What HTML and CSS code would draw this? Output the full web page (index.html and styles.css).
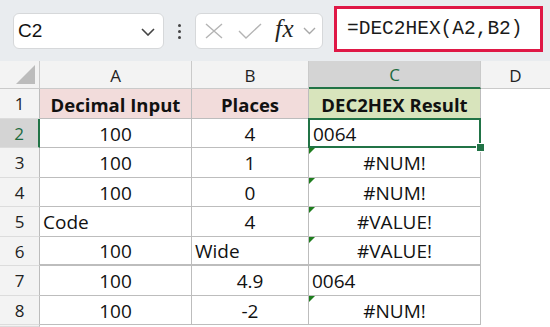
FILE: index.html
```html
<!DOCTYPE html>
<html lang="en">
<head>
    <meta charset="UTF-8">
    <title>DEC2HEX</title>
    <link rel="stylesheet" href="styles.css">
</head>
<body>
    <div class="toolbar">
        <div class="namebox">
            <span>C2</span>
            <svg class="chev" width="14" height="8" viewBox="0 0 14 8"><path d="M1 1 L7 7 L13 1" fill="none" stroke="#444" stroke-width="1.6"/></svg>
        </div>
        <div class="dots"><i></i><i></i><i></i></div>
        <div class="fxbox">
            <svg width="20" height="16" viewBox="0 0 20 16"><path d="M2 1 L18 15 M18 1 L2 15" stroke="#b4b4b4" stroke-width="1.4" fill="none"/></svg>
            <svg width="24" height="16" viewBox="0 0 24 16"><path d="M1 8 L8 15 L23 1" stroke="#b4b4b4" stroke-width="1.4" fill="none"/></svg>
            <span class="fx">fx</span>
            <svg width="13" height="8" viewBox="0 0 13 8"><path d="M1 1 L6.5 6.5 L12 1" fill="none" stroke="#a8a8a8" stroke-width="1.4"/></svg>
        </div>
        <div class="formula">=DEC2HEX(A2,B2)</div>
    </div>

    <div class="sheet">
        <div class="corner"><div class="tri"></div></div>
        <div class="colhead">A</div>
        <div class="colhead">B</div>
        <div class="colhead active">C</div>
        <div class="colhead last">D</div>

        <div class="rowhead">1</div>
        <div class="cell head pink">Decimal Input</div>
        <div class="cell head pink">Places</div>
        <div class="cell head green">DEC2HEX Result</div>
        <div class="blank"></div>

        <div class="rowhead active">2</div>
        <div class="cell">100</div>
        <div class="cell">4</div>
        <div class="cell left selected">0064<span class="handle"></span></div>
        <div class="blank"></div>

        <div class="rowhead">3</div>
        <div class="cell">100</div>
        <div class="cell">1</div>
        <div class="cell flag">#NUM!</div>
        <div class="blank"></div>

        <div class="rowhead">4</div>
        <div class="cell">100</div>
        <div class="cell">0</div>
        <div class="cell flag">#NUM!</div>
        <div class="blank"></div>

        <div class="rowhead">5</div>
        <div class="cell left">Code</div>
        <div class="cell">4</div>
        <div class="cell flag">#VALUE!</div>
        <div class="blank"></div>

        <div class="rowhead">6</div>
        <div class="cell thick">100</div>
        <div class="cell left thick">Wide</div>
        <div class="cell flag thick">#VALUE!</div>
        <div class="blank"></div>

        <div class="rowhead">7</div>
        <div class="cell">100</div>
        <div class="cell">4.9</div>
        <div class="cell left">0064</div>
        <div class="blank"></div>

        <div class="rowhead">8</div>
        <div class="cell">100</div>
        <div class="cell">-2</div>
        <div class="cell flag">#NUM!</div>
        <div class="blank"></div>

        <div class="rowhead"></div>
        <div class="blank"></div>
        <div class="blank"></div>
        <div class="blank"></div>
        <div class="blank"></div>
    </div>
</body>
</html>
```

FILE: styles.css
```css
* {
    margin: 0;
    padding: 0;
    box-sizing: border-box;
}

body {
    width: 550px;
    height: 327px;
    overflow: hidden;
    background: #ffffff;
    font-family: "Open Sans", Arial, sans-serif;
    color: #111;
}

/* formula bar */
.toolbar {
    height: 61px;
    background: #e9ecef;
    display: flex;
    align-items: flex-start;
    padding-left: 13px;
}

.namebox {
    width: 151px;
    height: 36px;
    margin-top: 13px;
    background: #fff;
    border: 1px solid #d6d8da;
    border-radius: 6px;
    display: flex;
    align-items: center;
    justify-content: space-between;
    padding: 0 8px 0 4px;
    font-family: "Liberation Sans", Arial, sans-serif;
    font-size: 19px;
}

.namebox .chev {
    margin-top: 2px;
}

.dots {
    width: 4px;
    margin: 24px 0 0 14px;
    display: flex;
    flex-direction: column;
    gap: 3px;
}

.dots i {
    width: 3px;
    height: 3px;
    background: #444;
    border-radius: 50%;
}

.fxbox {
    width: 128px;
    height: 36px;
    margin: 13px 0 0 13px;
    background: #fff;
    border: 1px solid #d6d8da;
    border-radius: 6px;
    display: flex;
    align-items: center;
    padding-left: 8px;
    gap: 14px;
}

.fx {
    font-family: "Liberation Serif", serif;
    font-style: italic;
    font-size: 25px;
    color: #222;
    margin: -5px -5px 0 -1px;
    letter-spacing: 0.5px;
}

.formula {
    width: 209px;
    height: 46px;
    margin: 6px 0 0 11px;
    background: #fff;
    border: 3px solid #df1846;
    font-family: "Liberation Mono", monospace;
    font-size: 19.5px;
    line-height: 40px;
    padding-left: 10px;
    color: #1a1a1a;
}

/* grid */
.sheet {
    display: grid;
    grid-template-columns: 40px 152px 117px 172px 1fr;
    grid-template-rows: 28px 30px 29px 30px 29px 30px 29px 30px 29px 2px;
    font-family: "Open Sans", Arial, sans-serif;
}

.corner {
    background: #f3f3f3;
    border-right: 1px solid #cacaca;
    border-bottom: 1px solid #cacaca;
    position: relative;
}

.tri {
    position: absolute;
    right: 4px;
    bottom: 4px;
    width: 0;
    height: 0;
    border-left: 19px solid transparent;
    border-bottom: 19px solid #bcbcbc;
}

.colhead {
    background: #f3f3f3;
    border-right: 1px solid #cacaca;
    border-bottom: 1px solid #cacaca;
    display: flex;
    align-items: center;
    justify-content: center;
    font-size: 17px;
    color: #222;
    padding-top: 1px;
}

.colhead.last {
    border-right: none;
}

.colhead.active {
    background: #d4d4d4;
    color: #1d6b3f;
    border-bottom: 2px solid #217346;
}

.rowhead {
    background: #f3f3f3;
    border-right: 1px solid #bcbcbc;
    border-bottom: 1px solid #dcdcdc;
    display: flex;
    align-items: center;
    justify-content: center;
    font-size: 17px;
    color: #222;
}

.rowhead.active {
    background: #d4d4d4;
    color: #1d6b3f;
    border-right: 2px solid #217346;
}

.cell {
    border-right: 1px solid #bdbdbd;
    border-bottom: 1px solid #bdbdbd;
    display: flex;
    align-items: center;
    justify-content: center;
    font-family: "Open Sans", sans-serif;
    font-size: 19px;
    color: #111;
    position: relative;
    padding-top: 1px;
}

.cell.left {
    justify-content: flex-start;
    padding-left: 3px;
}

.cell.head {
    font-weight: bold;
    font-size: 18.5px;
}

.pink {
    background: #f2dcdb;
}

.green {
    background: #d8e4bc;
}

.cell.thick {
    border-bottom: 2px solid #bdbdbd;
}

.flag::before {
    content: "";
    position: absolute;
    left: 0;
    top: 0;
    border-top: 6px solid #1e7d1e;
    border-right: 6px solid transparent;
}

.selected {
    border: 2px solid #217346;
    margin: -1px 0 0 -1px;
    padding-left: 4px;
    z-index: 2;
}

.handle {
    position: absolute;
    right: -6px;
    bottom: -6px;
    width: 9px;
    height: 9px;
    background: #217346;
    border: 1px solid #fff;
}
```
